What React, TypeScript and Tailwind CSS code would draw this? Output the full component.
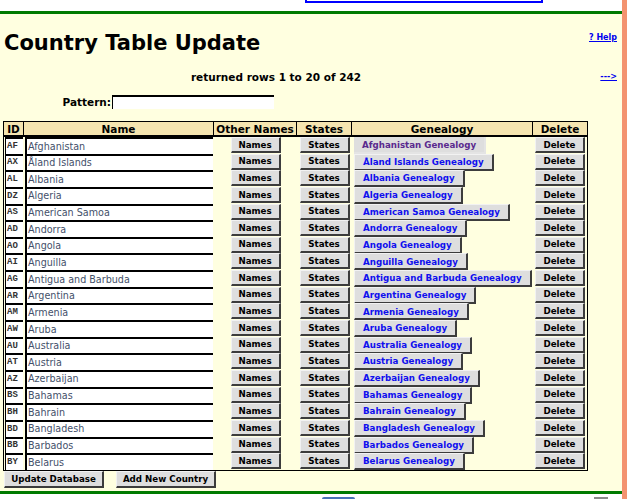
import React from "react";

const rows: [string, string][] = [
  ["AF", "Afghanistan"],
  ["AX", "Åland Islands"],
  ["AL", "Albania"],
  ["DZ", "Algeria"],
  ["AS", "American Samoa"],
  ["AD", "Andorra"],
  ["AO", "Angola"],
  ["AI", "Anguilla"],
  ["AG", "Antigua and Barbuda"],
  ["AR", "Argentina"],
  ["AM", "Armenia"],
  ["AW", "Aruba"],
  ["AU", "Australia"],
  ["AT", "Austria"],
  ["AZ", "Azerbaijan"],
  ["BS", "Bahamas"],
  ["BH", "Bahrain"],
  ["BD", "Bangladesh"],
  ["BB", "Barbados"],
  ["BY", "Belarus"],
];

function Btn({ children, className = "" }: { children: React.ReactNode; className?: string }) {
  return (
    <div
      className={
        "flex items-center justify-center pt-[1px] bg-[#dedede] border-t border-l border-t-[#f2f2f2] border-l-[#f2f2f2] border-r-2 border-b-2 border-r-[#3c3c3c] border-b-[#3c3c3c] text-[8.7px] font-bold text-black leading-none " +
        className
      }
    >
      {children}
    </div>
  );
}

export default function App() {
  return (
    <div className="flex w-[627px] h-[499px] overflow-hidden font-['DejaVu_Sans',sans-serif] text-black">
      <div className="w-[622px] flex flex-col">
        <div className="h-[11px] bg-white shrink-0">
          <div className="ml-[305px] w-[238px] h-[3px] border-x-2 border-b-2 border-[#0000ff]" />
        </div>
        <div className="h-[3px] bg-[#007a00] shrink-0" />
        <div className="flex-1 bg-[#ffffe0] flex flex-col">
          <div className="mt-[16px] h-[26px] flex justify-between">
            <div className="pl-[4px] text-[21px] leading-[26px] font-bold">Country Table Update</div>
            <div className="pr-[5px] mt-[3px] text-[8px] leading-[10px] font-bold text-[#0000ee] underline">? Help</div>
          </div>
          <div className="mt-[14px] h-[14px] flex items-center">
            <div className="w-[552px] text-center text-[10.5px] leading-[14px] font-bold">returned rows 1 to 20 of 242</div>
            <div className="flex-1 text-right pr-[5px] text-[8px] leading-[10px] font-bold text-[#0000ee] underline">---&gt;</div>
          </div>
          <div className="mt-[11px] h-[14px] flex items-center">
            <div className="w-[112px] text-right pr-[1px] text-[10.5px] leading-[14px] font-bold">Pattern:</div>
            <div className="w-[162px] h-[14px] bg-white border-t-2 border-l border-black" />
          </div>
          <div className="mt-[12px] ml-[3px] w-[585px] border border-black flex flex-col">
            <div className="flex h-[15px] bg-[#f5e5b0] border-b-2 border-black text-[10.5px] font-bold leading-[14px]">
              <div className="w-[20px] border-r border-black text-center">ID</div>
              <div className="w-[190px] border-r border-black text-center">Name</div>
              <div className="w-[83px] border-r border-black text-center">Other Names</div>
              <div className="w-[55px] border-r border-black text-center">States</div>
              <div className="w-[181px] border-r border-black text-center">Genealogy</div>
              <div className="w-[54px] text-center">Delete</div>
            </div>
            {rows.map(([id, name], i) => (
              <div key={id} className="flex h-[16.65px]">
                <div className="w-[20px] pl-[1px]">
                  <div className="w-[18px] h-full bg-white border-t-2 border-l border-black flex items-center pl-[1px] font-['Liberation_Mono',monospace] font-bold text-[9px] text-[#333] leading-none">
                    {id}
                  </div>
                </div>
                <div className="w-[190px] pl-[1px]">
                  <div className="w-[188px] h-full bg-white border-t-2 border-l-2 border-black flex items-center pl-[1px] text-[9.6px] text-[#44506a] leading-none whitespace-nowrap">
                    {name}
                  </div>
                </div>
                <div className="w-[83px] flex justify-center">
                  <Btn className="w-[50px] h-[16px]">Names</Btn>
                </div>
                <div className="w-[55px] flex justify-center">
                  <Btn className="w-[50px] h-[16px]">States</Btn>
                </div>
                <div className="w-[181px] pl-[2px] flex">
                  <div
                    className={
                      "h-[17px] pl-[8px] pr-[8px] pt-[1px] flex items-center bg-[#dedede] text-[8.7px] font-bold leading-none whitespace-nowrap " +
                      (i === 0
                        ? "text-[#5a2a8e] border-r-2 border-b-2 border-[#e4e4e4]"
                        : "text-[#1010ee] border-t border-l border-t-[#f2f2f2] border-l-[#f2f2f2] border-r-2 border-b-2 border-r-[#3c3c3c] border-b-[#3c3c3c]")
                    }
                  >
                    {name} Genealogy
                  </div>
                </div>
                <div className="w-[54px] flex justify-center">
                  <Btn className="w-[50px] h-[16px]">Delete</Btn>
                </div>
              </div>
            ))}
          </div>
          <div className="ml-[4px] flex gap-[12px]">
            <Btn className="w-[100px] h-[17px]">Update Database</Btn>
            <Btn className="w-[100px] h-[17px]">Add New Country</Btn>
          </div>
        </div>
        <div className="h-[3px] bg-[#007a00] shrink-0" />
        <div className="h-[5px] bg-white shrink-0 flex items-end">
          <div className="ml-[322px] w-[33px] h-[2px] bg-[#4a72b8] rounded-t-[2px]" />
          <div className="ml-[239px] w-[14px] h-[2px] bg-[#8a8a8a]" />
        </div>
      </div>
      <div className="w-[5px] bg-[#f39370]" />
    </div>
  );
}
